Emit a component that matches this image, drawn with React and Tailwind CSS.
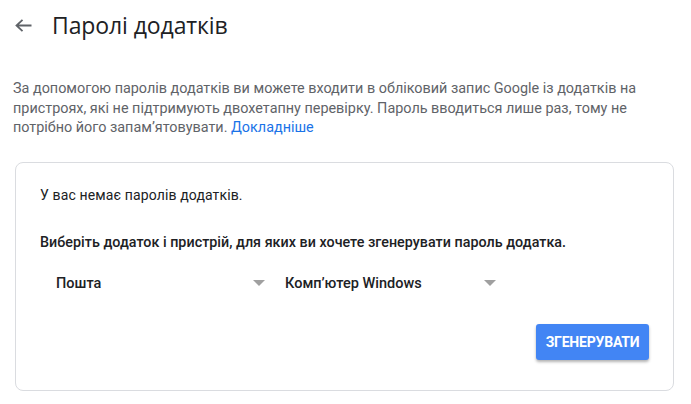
import React from 'react';

function Caret() {
  return (
    <svg width="12" height="6" viewBox="0 0 12 6" className="shrink-0">
      <path d="M0 0h12L6 6z" fill="#a0a0a0" />
    </svg>
  );
}

function Select({ label, className }) {
  return (
    <div className={`flex items-center justify-between ${className}`}>
      <span className="text-[14.5px] font-medium text-[#202124] tracking-[0px]">{label}</span>
      <Caret />
    </div>
  );
}

export default function App() {
  return (
    <div className="w-[691px] h-[404px] bg-white overflow-hidden font-['Roboto',sans-serif]">
      {/* header */}
      <div className="flex items-center h-[50px] pl-[15px]">
        <svg width="17" height="13" viewBox="0 0 17 13" className="mt-[1px]">
          <path d="M16.5 6.5H1.5M7.5 0.8L1.5 6.5l6 5.7" fill="none" stroke="#5f6368" strokeWidth="1.8" />
        </svg>
        <h1 className="ml-[20px] text-[23px] text-[#202124] font-['Open_Sans',sans-serif] tracking-[-0.1px]">Паролі додатків</h1>
      </div>

      {/* description */}
      <p className="mt-[29px] pl-[13px] pr-[10px] text-[14.4px] leading-[19.5px] text-[#5f6368]">
        За допомогою паролів додатків ви можете входити в обліковий запис Google із додатків на
        <br />
        пристроях, які не підтримують двохетапну перевірку. Пароль вводиться лише раз, тому не
        <br />
        потрібно його запам’ятовувати. <a className="text-[#1a73e8]">Докладніше</a>
      </p>

      {/* card */}
      <div className="ml-[15px] mt-[24px] w-[659px] h-[229px] border border-[#dadce0] rounded-[8px] pt-[22px] pl-[24px] pr-[24px]">
        <p className="text-[14px] leading-[20px] text-[#202124] tracking-[0.13px]">У вас немає паролів додатків.</p>
        <p className="mt-[27px] text-[14.3px] leading-[20px] font-medium text-[#202124] tracking-[0.03px]">
          Виберіть додаток і пристрій, для яких ви хочете згенерувати пароль додатка.
        </p>
        <div className="flex mt-[21px] pl-[16px]">
          <Select label="Пошта" className="w-[209px]" />
          <Select label="Комп’ютер Windows" className="ml-[20px] w-[211px]" />
        </div>
        <div className="flex justify-end mt-[30px]">
          <button className="w-[113px] h-[36px] rounded-[3px] bg-[#4285f4] text-white text-[14px] font-bold uppercase tracking-[-0.2px] shadow-[0_2px_3px_rgba(0,0,0,0.3)]">
            Згенерувати
          </button>
        </div>
      </div>
    </div>
  );
}
